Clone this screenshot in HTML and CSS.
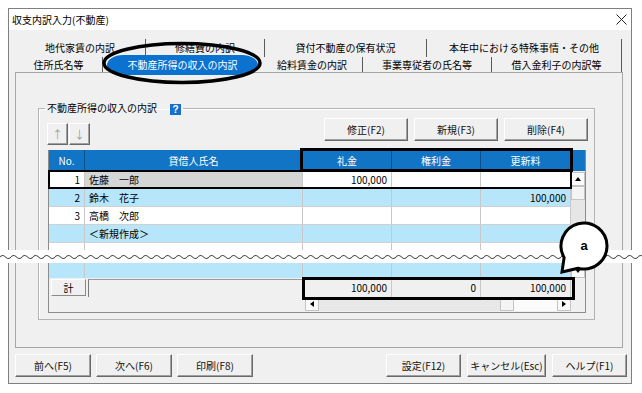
FILE: index.html
```html
<!DOCTYPE html>
<html lang="ja">
<head>
  <meta charset="UTF-8">
  <title>収支内訳入力(不動産)</title>
  <link rel="stylesheet" href="styles.css">
</head>
<body>
  <div class="window">
    <div class="titlebar">
      <span>収支内訳入力(不動産)</span>
      <svg class="close" width="11" height="11" viewBox="0 0 11 11"><path d="M0.5 0.5L10.5 10.5M10.5 0.5L0.5 10.5" stroke="#222" stroke-width="1"/></svg>
    </div>

    <div class="tabs">
      <div class="tab-row back">
        <div class="tab">地代家賃の内訳</div>
        <div class="tab">修繕費の内訳</div>
        <div class="tab">貸付不動産の保有状況</div>
        <div class="tab">本年中における特殊事情・その他</div>
      </div>
      <div class="tab-row front">
        <div class="tab">住所氏名等</div>
        <div class="tab active">不動産所得の収入の内訳</div>
        <div class="tab">給料賃金の内訳</div>
        <div class="tab">事業専従者の氏名等</div>
        <div class="tab">借入金利子の内訳等</div>
      </div>

      <div class="panel">
        <fieldset class="group">
          <legend>不動産所得の収入の内訳<span class="help">?</span></legend>

          <div class="toolbar">
            <div class="move">
              <button class="btn arrow">↑</button>
              <button class="btn arrow">↓</button>
            </div>
            <div class="actions">
              <button class="btn">修正(F2)</button>
              <button class="btn">新規(F3)</button>
              <button class="btn">削除(F4)</button>
            </div>
          </div>

          <div class="grid">
            <div class="grid-head">
              <div class="cell c-no">No.</div>
              <div class="cell c-name">貸借人氏名</div>
              <div class="cell c-key">礼金</div>
              <div class="cell c-right">権利金</div>
              <div class="cell c-renew">更新料</div>
              <div class="cell c-sb"></div>
            </div>

            <div class="grid-body">
              <div class="rows">
                <div class="row current">
                  <div class="cell c-no num">1</div>
                  <div class="cell c-name">佐藤　一郎</div>
                  <div class="cell c-key num">100,000</div>
                  <div class="cell c-right num"></div>
                  <div class="cell c-renew num"></div>
                </div>
                <div class="row alt">
                  <div class="cell c-no num">2</div>
                  <div class="cell c-name">鈴木　花子</div>
                  <div class="cell c-key num"></div>
                  <div class="cell c-right num"></div>
                  <div class="cell c-renew num">100,000</div>
                </div>
                <div class="row">
                  <div class="cell c-no num">3</div>
                  <div class="cell c-name">高橋　次郎</div>
                  <div class="cell c-key num"></div>
                  <div class="cell c-right num"></div>
                  <div class="cell c-renew num"></div>
                </div>
                <div class="row alt">
                  <div class="cell c-no num"></div>
                  <div class="cell c-name">＜新規作成＞</div>
                  <div class="cell c-key num"></div>
                  <div class="cell c-right num"></div>
                  <div class="cell c-renew num"></div>
                </div>
                <div class="row">
                  <div class="cell c-no num"></div>
                  <div class="cell c-name"></div>
                  <div class="cell c-key num"></div>
                  <div class="cell c-right num"></div>
                  <div class="cell c-renew num"></div>
                </div>
                <div class="row alt">
                  <div class="cell c-no num"></div>
                  <div class="cell c-name"></div>
                  <div class="cell c-key num"></div>
                  <div class="cell c-right num"></div>
                  <div class="cell c-renew num"></div>
                </div>
              </div>
              <div class="vscroll">
                <div class="sb-btn up"></div>
                <div class="sb-thumb"></div>
                <div class="sb-track"></div>
                <div class="sb-btn down"></div>
              </div>
            </div>

            <div class="grid-total">
              <div class="total-label">計</div>
              <div class="total-blank"></div>
              <div class="cell c-key num">100,000</div>
              <div class="cell c-right num">0</div>
              <div class="cell c-renew num">100,000</div>
            </div>

            <div class="hscroll-row">
              <div class="hscroll">
                <div class="sb-btn left"></div>
                <div class="sb-track"></div>
                <div class="sb-thumb"></div>
                <div class="sb-light"></div>
                <div class="sb-btn right"></div>
              </div>
            </div>

            <!-- annotation boxes -->
            <div class="mark mark-head"></div>
            <div class="mark mark-row"></div>
            <div class="mark mark-total"></div>
          </div>
        </fieldset>
      </div>
    </div>

    <div class="footer">
      <div class="btn-group">
        <button class="btn">前へ(F5)</button>
        <button class="btn">次へ(F6)</button>
        <button class="btn">印刷(F8)</button>
      </div>
      <div class="btn-group">
        <button class="btn">設定(F12)</button>
        <button class="btn">キャンセル(Esc)</button>
        <button class="btn">ヘルプ(F1)</button>
      </div>
    </div>
  </div>

  <svg class="tab-mark" width="166" height="46" viewBox="0 0 166 46">
    <ellipse cx="82" cy="23" rx="78" ry="19.5" fill="none" stroke="#000" stroke-width="3.5"/>
  </svg>

  <div class="cut">
    <svg width="642" height="13" viewBox="0 0 642 13">
      <defs>
        <pattern id="wave" width="11" height="13" patternUnits="userSpaceOnUse">
          <path d="M0 7 Q2.75 4 5.5 7 T11 7" fill="none" stroke="#4a4a4a" stroke-width="1.1"/>
        </pattern>
      </defs>
      <rect width="642" height="13" fill="url(#wave)"/>
    </svg>
  </div>

  <svg class="callout" width="60" height="60" viewBox="0 0 60 60">
    <path d="M23 50.2 L7 54 L9.1 39.5 A23 23 0 1 1 23 50.2 Z" fill="#fff" stroke="#000" stroke-width="3" stroke-linejoin="miter"/>
    <text x="29" y="32" text-anchor="middle">a</text>
  </svg>
</body>
</html>
```

FILE: styles.css
```css
body {
  margin: 0;
  width: 642px;
  height: 393px;
  overflow: hidden;
  position: relative;
  background: #fff;
  font-family: "Noto Sans CJK JP", "Liberation Sans", sans-serif;
  font-size: 10px;
  color: #000;
}
.window {
  margin: 8px 0 0 8px;
  width: 624px;
  height: 376px;
  box-sizing: border-box;
  border: 1px solid #7f7f7f;
  background: #f0f0f0;
}
.titlebar {
  height: 21px;
  background: #fff;
  display: flex;
  align-items: center;
  justify-content: space-between;
  padding: 0 4px 0 3px;
  line-height: 21px;
}

/* tabs */
.tabs {
  margin: 9px 8px 0 6px;
}
.tab-row {
  display: flex;
}
.tab-row.back {
  height: 18px;
  line-height: 18px;
}
.tab-row.front {
  height: 15px;
  line-height: 15px;
}
.tab {
  box-sizing: border-box;
  text-align: center;
  border-right: 1px solid #5a5a5a;
  white-space: nowrap;
}
.back .tab:nth-child(1) { width: 131px; }
.back .tab:nth-child(2) { width: 119px; }
.back .tab:nth-child(3) { width: 162px; }
.back .tab:nth-child(4) { width: 195px; }
.front .tab:nth-child(1) { width: 88px; }
.front .tab:nth-child(3) { width: 101px; }
.front .tab:nth-child(4) { width: 129px; }
.front .tab:nth-child(5) { width: 130px; }
.tab.active {
  position: relative;
  width: 151px;
  height: 20px;
  margin: -2px 4px 0;
  line-height: 20px;
  border-right: none;
  border-radius: 16px / 10px;
  background: #0b72cf;
  color: #fff;
}
.panel {
  height: 276px;
  box-sizing: border-box;
  border: 1px solid #a6a6a6;
  background: #f0f0f0;
}

/* group box */
.group {
  margin: 27px 0 0 22px;
  width: 557px;
  min-width: 0;
  box-sizing: border-box;
  padding: 2px 6px 6px 9px;
  border: 1px solid #b4b4b4;
  box-shadow: inset 1px 1px #fff;
}
.group legend {
  margin-left: -3px;
  padding: 0 2px;
  line-height: 16px;
}
.help {
  display: inline-block;
  width: 11px;
  height: 11px;
  margin-left: 13px;
  vertical-align: -1px;
  background: #1670c9;
  color: #fff;
  font: bold 10px/11px "Liberation Sans", sans-serif;
  text-align: center;
}
.toolbar {
  display: flex;
  justify-content: space-between;
  height: 27px;
}
.move {
  display: flex;
  gap: 1px;
  align-self: flex-end;
  margin-left: -1px;
}
.actions {
  display: flex;
  gap: 6px;
  align-self: flex-start;
}

.btn {
  font: inherit;
  color: #111;
  padding: 0;
  width: 84px;
  height: 23px;
  background: #f0f0f0;
  border: 1px solid;
  border-color: #fff #696969 #696969 #fff;
  box-shadow: inset -1px -1px #a0a0a0;
}
.btn.arrow {
  width: 21px;
  height: 22px;
  color: #a0a0a0;
  font-size: 11px;
}

/* data grid */
.grid {
  position: relative;
  margin-top: 5px;
  width: 538px;
  box-sizing: border-box;
  border: 1px solid #8c8c8c;
  border-top: none;
  background: #f0f0f0;
}
.cell {
  box-sizing: border-box;
  height: 100%;
  border-right: 1px solid #c8c8c8;
  white-space: nowrap;
  overflow: hidden;
}
.c-no { width: 36px; }
.c-name { width: 218px; padding-left: 4px; }
.c-key { width: 89px; }
.c-right { width: 89px; }
.c-renew { width: 90px; }
.c-sb { width: 14px; }
.num {
  text-align: right;
  padding-right: 4px;
}
.grid-head {
  display: flex;
  height: 21px;
  line-height: 21px;
  background: #1174c4;
  color: #fff;
}
.grid-head .cell {
  text-align: center;
  padding: 0;
  border-right: 1px solid #0b4f8a;
}
.grid-head .c-sb { border-right: none; }
.grid-body {
  display: flex;
  height: 107px;
}
.rows {
  width: 522px;
  overflow: hidden;
  background: #fff;
}
.row {
  display: flex;
  height: 18px;
  box-sizing: border-box;
  border-bottom: 1px solid #d0d0d0;
  line-height: 17px;
}
.row.alt { background: #b7e5f9; }
.row.current .c-name { background: #d5d5d5; }

.vscroll {
  width: 14px;
  display: flex;
  flex-direction: column;
  background: #f0f0f0;
}
.sb-btn {
  box-sizing: border-box;
  width: 14px;
  height: 14px;
  display: grid;
  place-items: center;
  background: #fafafa;
  border: 1px solid #c4c4c4;
}
.sb-btn::before {
  content: "";
  border: 3px solid transparent;
}
.sb-btn.up { margin-top: 1px; }
.sb-btn.up::before { border-bottom: 4px solid #000; border-top: none; }
.sb-btn.down::before { border-top: 4px solid #000; border-bottom: none; }
.sb-btn.left::before { border-right: 4px solid #000; border-left: none; }
.sb-btn.right::before { border-left: 4px solid #000; border-right: none; }
.sb-thumb {
  box-sizing: border-box;
  height: 14px;
  width: 14px;
  background: #f4f4f4;
  border: 1px solid #c4c4c4;
}
.sb-track {
  flex: 1;
  background: #e6e6e6;
}

.grid-total {
  display: flex;
  align-items: center;
  height: 19px;
  line-height: 19px;
  background: #f0f0f0;
}
.total-label {
  box-sizing: border-box;
  width: 35px;
  height: 17px;
  margin-left: 2px;
  line-height: 15px;
  text-align: center;
  border: 1px solid;
  border-color: #fff #8a8a8a #8a8a8a #fff;
}
.total-blank {
  box-sizing: border-box;
  width: 215px;
  height: 18px;
  margin-left: 2px;
  border-left: 1px solid #7a7a7a;
  border-top: 1px solid #9a9a9a;
}
.grid-total .cell { border-right: 1px solid #c8c8c8; }

.hscroll-row {
  height: 15px;
  display: flex;
}
.hscroll {
  display: flex;
  margin-left: 256px;
  width: 266px;
  height: 14px;
}
.hscroll .sb-track { background: #e8e8e8; }
.hscroll .sb-light {
  width: 43px;
  background: #fbfbfb;
}

/* annotation boxes over the grid */
.mark {
  position: absolute;
  box-sizing: border-box;
  border: 3px solid #000;
}
.mark-head {
  left: 251px;
  top: -2px;
  width: 273px;
  height: 24px;
}
.mark-row {
  left: -1px;
  top: 20px;
  width: 524px;
  height: 19px;
  border-width: 2px;
}
.mark-total {
  left: 253px;
  top: 127px;
  width: 273px;
  height: 23px;
}

.footer {
  display: flex;
  justify-content: space-between;
  margin-top: 6px;
  padding: 0 4px 0 6px;
}
.btn-group {
  display: flex;
  gap: 5px;
}
.btn-group .btn { width: 76px; }
.btn-group + .btn-group { gap: 6px; }
.btn-group + .btn-group .btn { width: 75px; }
.btn-group + .btn-group .btn:nth-child(2) { width: 79px; }

/* page-level annotations */
.tab-mark {
  position: absolute;
  left: 100px;
  top: 40px;
}
.cut {
  position: absolute;
  left: 0;
  top: 250px;
  width: 642px;
  height: 13px;
  background: #fff;
}
.cut svg { display: block; }
.callout {
  position: absolute;
  left: 555px;
  top: 218px;
}
.callout text {
  font: bold 13px "Liberation Sans", sans-serif;
}
```
